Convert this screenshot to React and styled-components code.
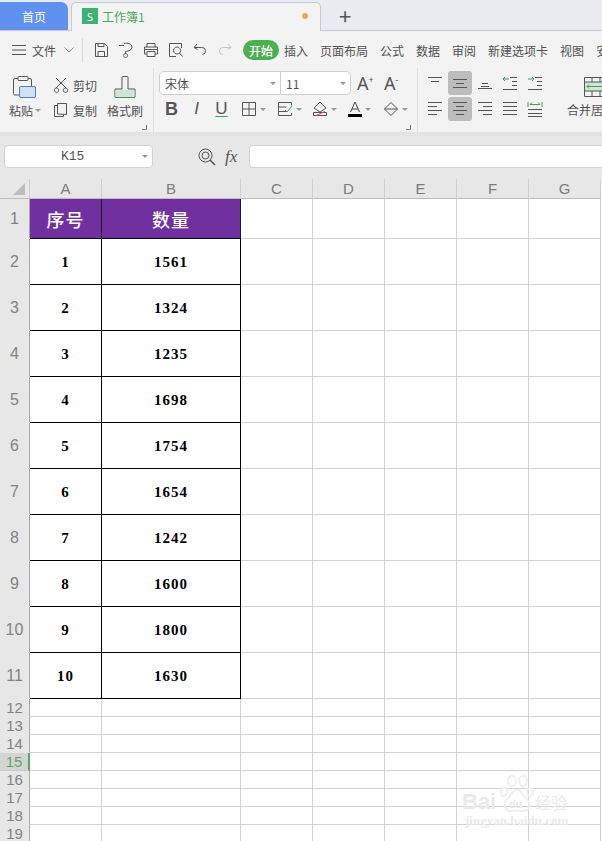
import React from 'react';
import styled, { createGlobalStyle } from 'styled-components';

////////////////////////////////////////////////////
///////////////////// DATA /////////////////////////
////////////////////////////////////////////////////
const rows = [
   [1, 1561], [2, 1324], [3, 1235], [4, 1698], [5, 1754],
   [6, 1654], [7, 1242], [8, 1600], [9, 1800], [10, 1630],
];
const columns = ['A', 'B', 'C', 'D', 'E', 'F', 'G'];
const menuItems = ['插入', '页面布局', '公式', '数据', '审阅', '新建选项卡', '视图', '安全'];

////////////////////////////////////////////////////
///////////////////// ICONS ////////////////////////
////////////////////////////////////////////////////
const Svg = ({ w = 16, h = 16, children }) => (
   <svg width={w} height={h} viewBox={`0 0 ${w} ${h}`} fill="none" stroke="#555" strokeWidth="1">{children}</svg>
);

const Save = () => <Svg><path d="M2.5 1.5h9l3 3v10h-12zM5 14.5v-5h6.500v5M5 1.500v3h6v-3" /></Svg>;
const SaveAs = () => <Svg><path d="M1 3.500h5M6 1.500c4-1 8 .5 8 3.500s-3 4-6.500 4.500M7.500 9.500v2M7.500 11.500a2 2 0 1 0 .1 0" /></Svg>;
const Printer = () => <Svg><path d="M4 5V1.500h8V5M4 12H1.500V5h13v7H12M4 9.500h8v5H4zM1.500 7.500h13" /></Svg>;
const Preview = () => <Svg><path d="M8 14.500H1.500v-13h12V6M9 5a3.500 3.500 0 1 0 .1 0M11.500 11l3 3.500" /></Svg>;
const Undo = () => <Svg><path d="M4 2 1 5.500l3.500 2M1.500 5.500h7a3.500 3.500 0 0 1 1 7" /></Svg>;
const Redo = () => <Svg><g stroke="#c4c4c4"><path d="M10 2l3 3.500-3.500 2M12.500 5.500h-7a3.500 3.500 0 0 0-1 7" /></g></Svg>;
const Hamburger = () => <Svg w={14} h={12}><path d="M0 1.500h14M0 6h14M0 10.500h14" /></Svg>;
const Chevron = () => <Svg w={10} h={6}><path d="M.5.500 5 5 9.500.500" stroke="#888" /></Svg>;

const Paste = () => (
   <svg width="24" height="24" viewBox="0 0 24 24" fill="none" stroke="#555">
      <path d="M5 3.500H2a1.500 1.500 0 0 0-1.500 1.500v13.500A1.500 1.500 0 0 0 2 20h5M15 3.500h2A1.500 1.500 0 0 1 18.500 5v6" />
      <rect x="5" y="1.500" width="10" height="4" rx="1" />
      <rect x="6.500" y="11.500" width="16" height="11" rx="1.500" fill="#cfe0f0" stroke="#4f81bd" />
   </svg>
);
const Scissors = () => <Svg><path d="M3 1l10 10M13 1 3 11M3.500 11a2.200 2.200 0 1 0 .1 0M12.500 11a2.200 2.200 0 1 0 .1 0" /></Svg>;
const Copy = () => <Svg><path d="M4.500 12V1.500h9v11zM4.500 3.500h-3v11h9v-2" /></Svg>;
const Brush = () => (
   <svg width="22" height="24" viewBox="0 0 22 24" fill="none" stroke="#555">
      <path d="M1 22V14h7V2.500a1 1 0 0 1 1-1h4a1 1 0 0 1 1 1V14h7v8z" />
      <rect x="1.500" y="15" width="19" height="7" fill="#cfe6d6" stroke="none" />
      <path d="M1 22.500h20" stroke="#4a8f5f" />
   </svg>
);
const Corner = () => <Svg w={6} h={6}><path d="M5.500 1v4.500H1" stroke="#777" /></Svg>;
const GridIcon = () => <Svg><path d="M1.500 1.500h13v13h-13zM1.500 8h13M8 1.500v13" /></Svg>;
const CondFormat = () => <Svg><path d="M14.500 4.500v-3h-13v13h13V12M1.500 6h8M1.500 10.500h8" /><path d="M8 9l2 2 5-6" stroke="#4a9a5f" /></Svg>;
const Fill = () => <Svg><path d="M8 1 2 7l6 4 6-4zM1.500 11.500h13v3h-13z" /><path d="M3 15 13 10.500" stroke="#e05050" /></Svg>;
const FontColor = () => (
   <svg width="14" height="16" viewBox="0 0 14 16" fill="none" stroke="#444">
      <path d="M2.500 11 7 1l4.500 10M4 8h6" /><rect x="0" y="13" width="14" height="3" fill="#000" stroke="none" />
   </svg>
);
const Eraser = () => <Svg><path d="M8 1.500 14.500 8 8 14.500 1.500 8zM1.500 8h13" /></Svg>;

const Lines = ({ spec, green }) => (
   <Svg>
      {spec.map(([x1, x2, y], i) => <path key={i} d={`M${x1} ${y}.5H${x2}`} />)}
      {green && <path d={green} stroke="#4a9a5f" />}
   </Svg>
);
const alignTop = [[1, 15, 2], [4, 12, 6]];
const alignMid = [[1, 15, 4], [4, 12, 8], [1, 15, 12]];
const alignBottom = [[5, 11, 8], [4, 12, 11], [1, 15, 13]];
const indentRows = [[8, 15, 2], [10, 15, 6], [10, 15, 10], [1, 15, 14]];
const leftAlign = [[1, 15, 1], [1, 10, 5], [1, 15, 9], [1, 10, 13]];
const centerAlign = [[1, 15, 1], [4, 12, 5], [1, 15, 9], [4, 12, 13]];
const rightAlign = [[1, 15, 1], [6, 15, 5], [1, 15, 9], [6, 15, 13]];
const justify = [[1, 15, 1], [1, 15, 5], [1, 15, 9], [1, 15, 13]];
const distribute = [[1, 15, 8], [1, 15, 12], [1, 15, 15]];

const Merge = () => (
   <svg width="24" height="22" viewBox="0 0 24 22" fill="none" stroke="#555">
      <rect x=".5" y="6" width="23" height="9" fill="#cfe8d6" stroke="none" />
      <path d="M.5 1.500h23v19H.5zM.5 6h23M.5 15h23M8 1.500V6M16 1.500V6M8 15v5M16 15v5" />
      <path d="M3 10.500h18M3 10.500l2-2M3 10.500l2 2M21 10.500l-2-2M21 10.500l-2 2" stroke="#4a9a5f" />
   </svg>
);
const Zoom = () => (
   <svg width="18" height="18" viewBox="0 0 18 18" fill="none" stroke="#555">
      <circle cx="7.500" cy="7.500" r="6.500" /><circle cx="7.500" cy="7.500" r="3.500" /><path d="M12 12l5 5" strokeWidth="1.500" />
   </svg>
);
const Paw = () => (
   <svg width="34" height="40" viewBox="0 0 34 40" fill="none" stroke="#efefef" strokeWidth="2">
      <ellipse cx="12" cy="6" rx="4" ry="5" /><ellipse cx="23" cy="6" rx="4" ry="5" />
      <ellipse cx="4" cy="17" rx="3" ry="4" /><ellipse cx="30" cy="17" rx="3" ry="4" />
      <path d="M17 15c-5 0-6 6-10 9-5 5-1 13 5 12 3-.6 7-.6 10 0 6 1 10-7 5-12-4-3-5-9-10-9z" />
   </svg>
);

////////////////////////////////////////////////////
//////////////////// COMPONENT /////////////////////
////////////////////////////////////////////////////
export default function App() {
   return (
      <Page>
         <GlobalStyle />
         <TabBar>
            <HomeTab>首页</HomeTab>
            <DocTab>
               <DocBadge>S</DocBadge>
               <DocName>工作簿1</DocName>
               <DirtyDot />
            </DocTab>
            <NewTab>+</NewTab>
         </TabBar>

         <MenuBar>
            <MenuBtn><Hamburger /></MenuBtn>
            <FileLabel>文件</FileLabel>
            <MenuBtn><Chevron /></MenuBtn>
            <MenuSep />
            <QuickIcons>
               <Save /><SaveAs /><Printer /><Preview /><Undo /><Redo />
            </QuickIcons>
            <StartPill>开始</StartPill>
            <MenuItems>
               {menuItems.map((item) => <MenuItem key={item}>{item}</MenuItem>)}
            </MenuItems>
         </MenuBar>

         <Ribbon>
            <ClipGroup>
               <BigTool $width={38}>
                  <Paste />
                  <BigLabel>粘贴<Arrow /></BigLabel>
               </BigTool>
               <SmallTools>
                  <SmallTool><Scissors />剪切</SmallTool>
                  <SmallTool><Copy />复制</SmallTool>
               </SmallTools>
               <BigTool $width={36}>
                  <Brush />
                  <BigLabel>格式刷</BigLabel>
               </BigTool>
               <CornerMark><Corner /></CornerMark>
            </ClipGroup>

            <FontGroup>
               <FontTop>
                  <FontSelect $width={122} $left>宋体<Arrow /></FontSelect>
                  <FontSelect $width={70} $right>11<Arrow /></FontSelect>
                  <GrowBtn>A<sup>+</sup></GrowBtn>
                  <GrowBtn>A<sup>-</sup></GrowBtn>
               </FontTop>
               <FontBottom>
                  <StyleBtn $bold>B</StyleBtn>
                  <StyleBtn $italic>I</StyleBtn>
                  <StyleBtn $under>U</StyleBtn>
                  <DropTool><GridIcon /><Arrow /></DropTool>
                  <DropTool><CondFormat /><Arrow /></DropTool>
                  <DropTool><Fill /><Arrow /></DropTool>
                  <DropTool><FontColor /><Arrow /></DropTool>
                  <DropTool><Eraser /><Arrow /></DropTool>
               </FontBottom>
               <CornerMark><Corner /></CornerMark>
            </FontGroup>

            <AlignGroup>
               <AlignBtn><Lines spec={alignTop} /></AlignBtn>
               <AlignBtn $active><Lines spec={alignMid} /></AlignBtn>
               <AlignBtn><Lines spec={alignBottom} /></AlignBtn>
               <AlignBtn><Lines spec={indentRows} green="M7 4H1M1 4l2-2M1 4l2 2" /></AlignBtn>
               <AlignBtn><Lines spec={indentRows} green="M1 4h6M7 4 5 2M7 4 5 6" /></AlignBtn>
               <AlignBtn><Lines spec={leftAlign} /></AlignBtn>
               <AlignBtn $active><Lines spec={centerAlign} /></AlignBtn>
               <AlignBtn><Lines spec={rightAlign} /></AlignBtn>
               <AlignBtn><Lines spec={justify} /></AlignBtn>
               <AlignBtn><Lines spec={distribute} green="M1 1v5M15 1v5M3 3.500h10M3 3.500l2-2M13 3.500l-2-2" /></AlignBtn>
            </AlignGroup>

            <MergeTool>
               <Merge />
               <BigLabel>合并居</BigLabel>
            </MergeTool>
         </Ribbon>

         <FormulaBar>
            <NameBox>K15<Arrow /></NameBox>
            <FormulaIcons>
               <Zoom />
               <FxLabel>fx</FxLabel>
            </FormulaIcons>
            <FormulaInput />
         </FormulaBar>

         <Sheet>
            <ColHead><CornerTriangle /></ColHead>
            {columns.map((col) => <ColHead key={col}>{col}</ColHead>)}

            <RowHead $height={40}>1</RowHead>
            <TitleCell>序号</TitleCell>
            <TitleCell>数量</TitleCell>
            <Blanks />

            {rows.map(([n, qty], i) => (
               <React.Fragment key={n}>
                  <RowHead $height={46}>{i + 2}</RowHead>
                  <DataCell>{n}</DataCell>
                  <DataCell>{qty}</DataCell>
                  <Blanks />
               </React.Fragment>
            ))}

            {[12, 13, 14, 15, 16, 17, 18, 19].map((n) => (
               <React.Fragment key={n}>
                  <RowHead $height={18} $selected={n === 15}>{n}</RowHead>
                  <Cell /><Cell />
                  <Blanks />
               </React.Fragment>
            ))}
         </Sheet>

         <Watermark>
            <WatermarkTop>
               <WatermarkBai>Bai</WatermarkBai>
               <PawWrap><Paw /><PawText>du</PawText></PawWrap>
               <WatermarkCn>经验</WatermarkCn>
            </WatermarkTop>
            <WatermarkUrl>jingyan.baidu.com</WatermarkUrl>
         </Watermark>
      </Page>
   );
}

const Blanks = () => ['C', 'D', 'E', 'F', 'G'].map((c) => <Cell key={c} />);

////////////////////////////////////////////////////
//////////////// STYLED COMPONENTS /////////////////
////////////////////////////////////////////////////
const uiFont = `"Noto Sans CJK SC", "Noto Sans", sans-serif`;

const GlobalStyle = createGlobalStyle`
   html, body {
      margin: 0;
      padding: 0;
      background: #fff;
   }
   * { box-sizing: border-box; }
`;
const Page = styled.div`
   position: relative;
   width: 602px;
   height: 841px;
   overflow: hidden;
   font-family: ${uiFont};
   font-size: 12px;
   color: #505050;
`;
const TabBar = styled.div`
   height: 31px;
   display: flex;
   align-items: flex-end;
   background: #e9ebf0;
   border-bottom: 1px solid #c6c9d3;
`;
const HomeTab = styled.div`
   width: 68px;
   height: 28px;
   background: #5f91f0;
   color: #fff;
   border-radius: 0 7px 0 0;
   display: flex;
   align-items: center;
   justify-content: center;
`;
const DocTab = styled.div`
   width: 250px;
   height: 29px;
   margin-left: 3px;
   margin-bottom: -1px;
   padding: 0 12px 2px 10px;
   background: #f3f3f3;
   border: 1px solid #c6c9d3;
   border-bottom: none;
   border-radius: 5px 5px 0 0;
   display: flex;
   align-items: center;
`;
const DocBadge = styled.div`
   width: 16px;
   height: 16px;
   background: #3cb371;
   color: #fff;
   font-size: 11px;
   font-family: "Noto Sans", sans-serif;
   display: flex;
   align-items: center;
   justify-content: center;
`;
const DocName = styled.div`
   margin-left: 4px;
   color: #4aa564;
   flex: 1;
`;
const DirtyDot = styled.div`
   width: 6px;
   height: 6px;
   border-radius: 50%;
   background: #e8a868;
`;
const NewTab = styled.div`
   width: 48px;
   height: 30px;
   text-align: center;
   font-size: 22px;
   line-height: 30px;
   color: #555;
`;
const MenuBar = styled.div`
   height: 37px;
   padding: 1px 0 0 12px;
   background: #f3f3f3;
   display: flex;
   align-items: center;
   overflow: hidden;
`;
const MenuBtn = styled.div`
   display: flex;
   flex: none;
`;
const FileLabel = styled.div`
   margin: 0 8px 0 6px;
   flex: none;
   white-space: nowrap;
`;
const MenuSep = styled.div`
   width: 1px;
   height: 24px;
   margin: 0 10px 0 8px;
   background: #d8d8d8;
   flex: none;
`;
const QuickIcons = styled.div`
   width: 150px;
   flex: none;
   display: flex;
   align-items: center;
   gap: 9px;
   svg { flex: none; }
`;
const StartPill = styled.div`
   width: 36px;
   height: 20px;
   flex: none;
   border-radius: 10px;
   background: #4caf50;
   color: #fff;
   font-weight: 500;
   display: flex;
   align-items: center;
   justify-content: center;
`;
const MenuItems = styled.div`
   margin-left: 5px;
   flex: none;
   display: flex;
   gap: 12px;
`;
const MenuItem = styled.div`
   flex: none;
   white-space: nowrap;
`;
const Ribbon = styled.div`
   height: 64px;
   background: #f3f3f3;
   display: flex;
   overflow: hidden;
`;
const ClipGroup = styled.div`
   position: relative;
   width: 154px;
   flex: none;
   padding: 7px 0 0 6px;
   border-right: 1px solid #e0e0e0;
   display: flex;
`;
const BigTool = styled.div`
   width: ${({$width}) => $width}px;
   flex: none;
   display: flex;
   flex-direction: column;
   align-items: center;
`;
const BigLabel = styled.div`
   margin-top: 3px;
   display: flex;
   align-items: center;
   gap: 2px;
   white-space: nowrap;
`;
const SmallTools = styled.div`
   width: 54px;
   margin: 0 0 0 9px;
   display: flex;
   flex-direction: column;
   gap: 5px;
`;
const SmallTool = styled.div`
   height: 20px;
   display: flex;
   align-items: center;
   gap: 4px;
`;
const CornerMark = styled.div`
   position: absolute;
   right: 6px;
   bottom: 2px;
   display: flex;
`;
const FontGroup = styled.div`
   position: relative;
   width: 264px;
   flex: none;
   padding: 3px 0 0 5px;
   border-right: 1px solid #e0e0e0;
`;
const FontTop = styled.div`
   height: 24px;
   display: flex;
   align-items: center;
`;
const Arrow = styled.span`
   width: 0;
   height: 0;
   display: inline-block;
   border: 3px solid transparent;
   border-top: 3px solid #999;
   border-bottom: none;
   flex: none;
`;
const FontSelect = styled.div`
   width: ${({$width}) => $width}px;
   height: 24px;
   padding: 0 4px 0 5px;
   background: #fff;
   border: 1px solid #cfcfcf;
   border-left-width: ${({$right}) => $right ? 0 : 1}px;
   border-radius: ${({$left}) => $left ? '5px 0 0 5px' : '0 5px 5px 0'};
   display: flex;
   align-items: center;
   justify-content: space-between;
`;
const GrowBtn = styled.div`
   width: 27px;
   padding-left: 6px;
   font-family: "Noto Sans", sans-serif;
   font-size: 18px;
   line-height: 24px;
   color: #555;
   flex: none;
   white-space: nowrap;
   sup {
      font-size: 9px;
      line-height: 0;
   }
`;
const FontBottom = styled.div`
   height: 26px;
   margin-top: 1px;
   display: flex;
   align-items: center;
`;
const StyleBtn = styled.div`
   width: 25px;
   flex: none;
   text-align: center;
   font-family: "Liberation Sans", sans-serif;
   font-size: ${({$bold}) => $bold ? 18 : 17}px;
   line-height: 22px;
   color: #555;
   font-weight: ${({$bold}) => $bold ? 700 : 400};
   font-style: ${({$italic}) => $italic ? 'italic' : 'normal'};
   text-decoration: ${({$under}) => $under ? 'underline' : 'none'};
   text-decoration-color: #4a9a5f;
   text-underline-offset: 2px;
`;
const DropTool = styled.div`
   width: 35.5px;
   flex: none;
   display: flex;
   align-items: center;
   gap: 3px;
   ${StyleBtn} + & { margin-left: 7px; }
`;
const AlignGroup = styled.div`
   width: 130px;
   flex: none;
   margin: 3px 0 0 5px;
   display: grid;
   grid-template-columns: repeat(5, 24px);
   grid-template-rows: 24px 24px;
   column-gap: 1px;
   row-gap: 2px;
`;
const AlignBtn = styled.div`
   border-radius: 3px;
   background: ${({$active}) => $active ? '#bdbdbd' : 'transparent'};
   display: flex;
   align-items: center;
   justify-content: center;
`;
const MergeTool = styled.div`
   flex: none;
   margin: 8px 0 0 14px;
   display: flex;
   flex-direction: column;
   align-items: flex-start;
   svg { margin-left: 17px; }
`;
const FormulaBar = styled.div`
   height: 47px;
   padding: 9px 0 0 4px;
   background: #e7e7e7;
   border-top: 4px solid #e3e3e3;
   display: flex;
   align-items: flex-start;
`;
const NameBox = styled.div`
   width: 149px;
   height: 23px;
   padding: 0 4px 0 56px;
   background: #fff;
   border: 1px solid #d2d2d2;
   border-radius: 4px;
   font-family: "Liberation Mono", monospace;
   font-size: 13px;
   color: #555;
   display: flex;
   align-items: center;
   justify-content: space-between;
`;
const FormulaIcons = styled.div`
   width: 96px;
   height: 23px;
   padding-left: 45px;
   display: flex;
   align-items: center;
   gap: 9px;
`;
const FxLabel = styled.div`
   font-family: "Liberation Serif", serif;
   font-style: italic;
   font-size: 17px;
   color: #555;
`;
const FormulaInput = styled.div`
   flex: 1;
   height: 23px;
   background: #fff;
   border: 1px solid #d2d2d2;
   border-right: none;
   border-radius: 4px 0 0 4px;
`;
const Sheet = styled.div`
   display: grid;
   grid-template-columns: 30px 72px 139px 72px 72px 72px 72px 72px 1fr;
   grid-auto-rows: min-content;
   background: #fff;
`;
const ColHead = styled.div`
   height: 20px;
   position: relative;
   background: #e7e7e7;
   border-right: 1px solid #cfcfcf;
   border-bottom: 1px solid #bdbdbd;
   font-family: "Liberation Sans", sans-serif;
   font-size: 15px;
   color: #7c7c7c;
   display: flex;
   align-items: center;
   justify-content: center;
`;
const CornerTriangle = styled.div`
   position: absolute;
   right: 4px;
   bottom: 3px;
   border-style: solid;
   border-width: 0 0 12px 12px;
   border-color: transparent transparent #bdbdbd transparent;
`;
const RowHead = styled.div`
   grid-column: 1;
   height: ${({$height}) => $height}px;
   background: ${({$selected}) => $selected ? '#d4d4d4' : '#e7e7e7'};
   border-right: ${({$selected}) => $selected ? '2px solid #4caf50' : '1px solid #a8a8a8'};
   border-bottom: 1px solid ${({$selected}) => $selected ? '#c8c8c8' : '#e7e7e7'};
   font-family: "Liberation Sans", sans-serif;
   font-size: ${({$height}) => $height === 18 ? 15 : 16}px;
   line-height: 17px;
   color: ${({$selected}) => $selected ? '#5ea564' : '#828282'};
   display: flex;
   align-items: center;
   justify-content: center;
`;
const Cell = styled.div`
   border-right: 1px solid #d2d2d2;
   border-bottom: 1px solid #d2d2d2;
`;
const TitleCell = styled.div`
   background: #7030a0;
   border-right: 1px solid #1a1a1a;
   border-bottom: 1px solid #000;
   color: #fff;
   font-size: 18px;
   font-weight: 500;
   letter-spacing: 1px;
   display: flex;
   align-items: center;
   justify-content: center;
`;
const DataCell = styled.div`
   padding-top: 1px;
   background: #fff;
   border-right: 1px solid #000;
   border-bottom: 1px solid #000;
   color: #000;
   font-family: "Liberation Serif", serif;
   font-weight: 700;
   font-size: 15px;
   letter-spacing: 1px;
   display: flex;
   align-items: center;
   justify-content: center;
`;
const Watermark = styled.div`
   position: absolute;
   left: 462px;
   top: 775px;
   width: 110px;
   pointer-events: none;
   color: #eaeaea;
`;
const WatermarkTop = styled.div`
   height: 40px;
   display: flex;
   align-items: flex-end;
`;
const WatermarkBai = styled.div`
   width: 38px;
   flex: none;
   font-family: "Liberation Sans", sans-serif;
   font-size: 22px;
   line-height: 26px;
   font-weight: 700;
`;
const PawWrap = styled.div`
   position: relative;
   width: 34px;
   height: 40px;
   flex: none;
`;
const PawText = styled.div`
   position: absolute;
   left: 9px;
   bottom: 5px;
   font-family: "Liberation Sans", sans-serif;
   font-size: 11px;
   line-height: 12px;
   font-weight: 700;
`;
const WatermarkCn = styled.div`
   margin-left: 1px;
   font-size: 16px;
   line-height: 26px;
   white-space: nowrap;
`;
const WatermarkUrl = styled.div`
   font-family: "Liberation Serif", serif;
   font-weight: 700;
   font-size: 13px;
   line-height: 12px;
   margin-left: 3px;
   white-space: nowrap;
`;
